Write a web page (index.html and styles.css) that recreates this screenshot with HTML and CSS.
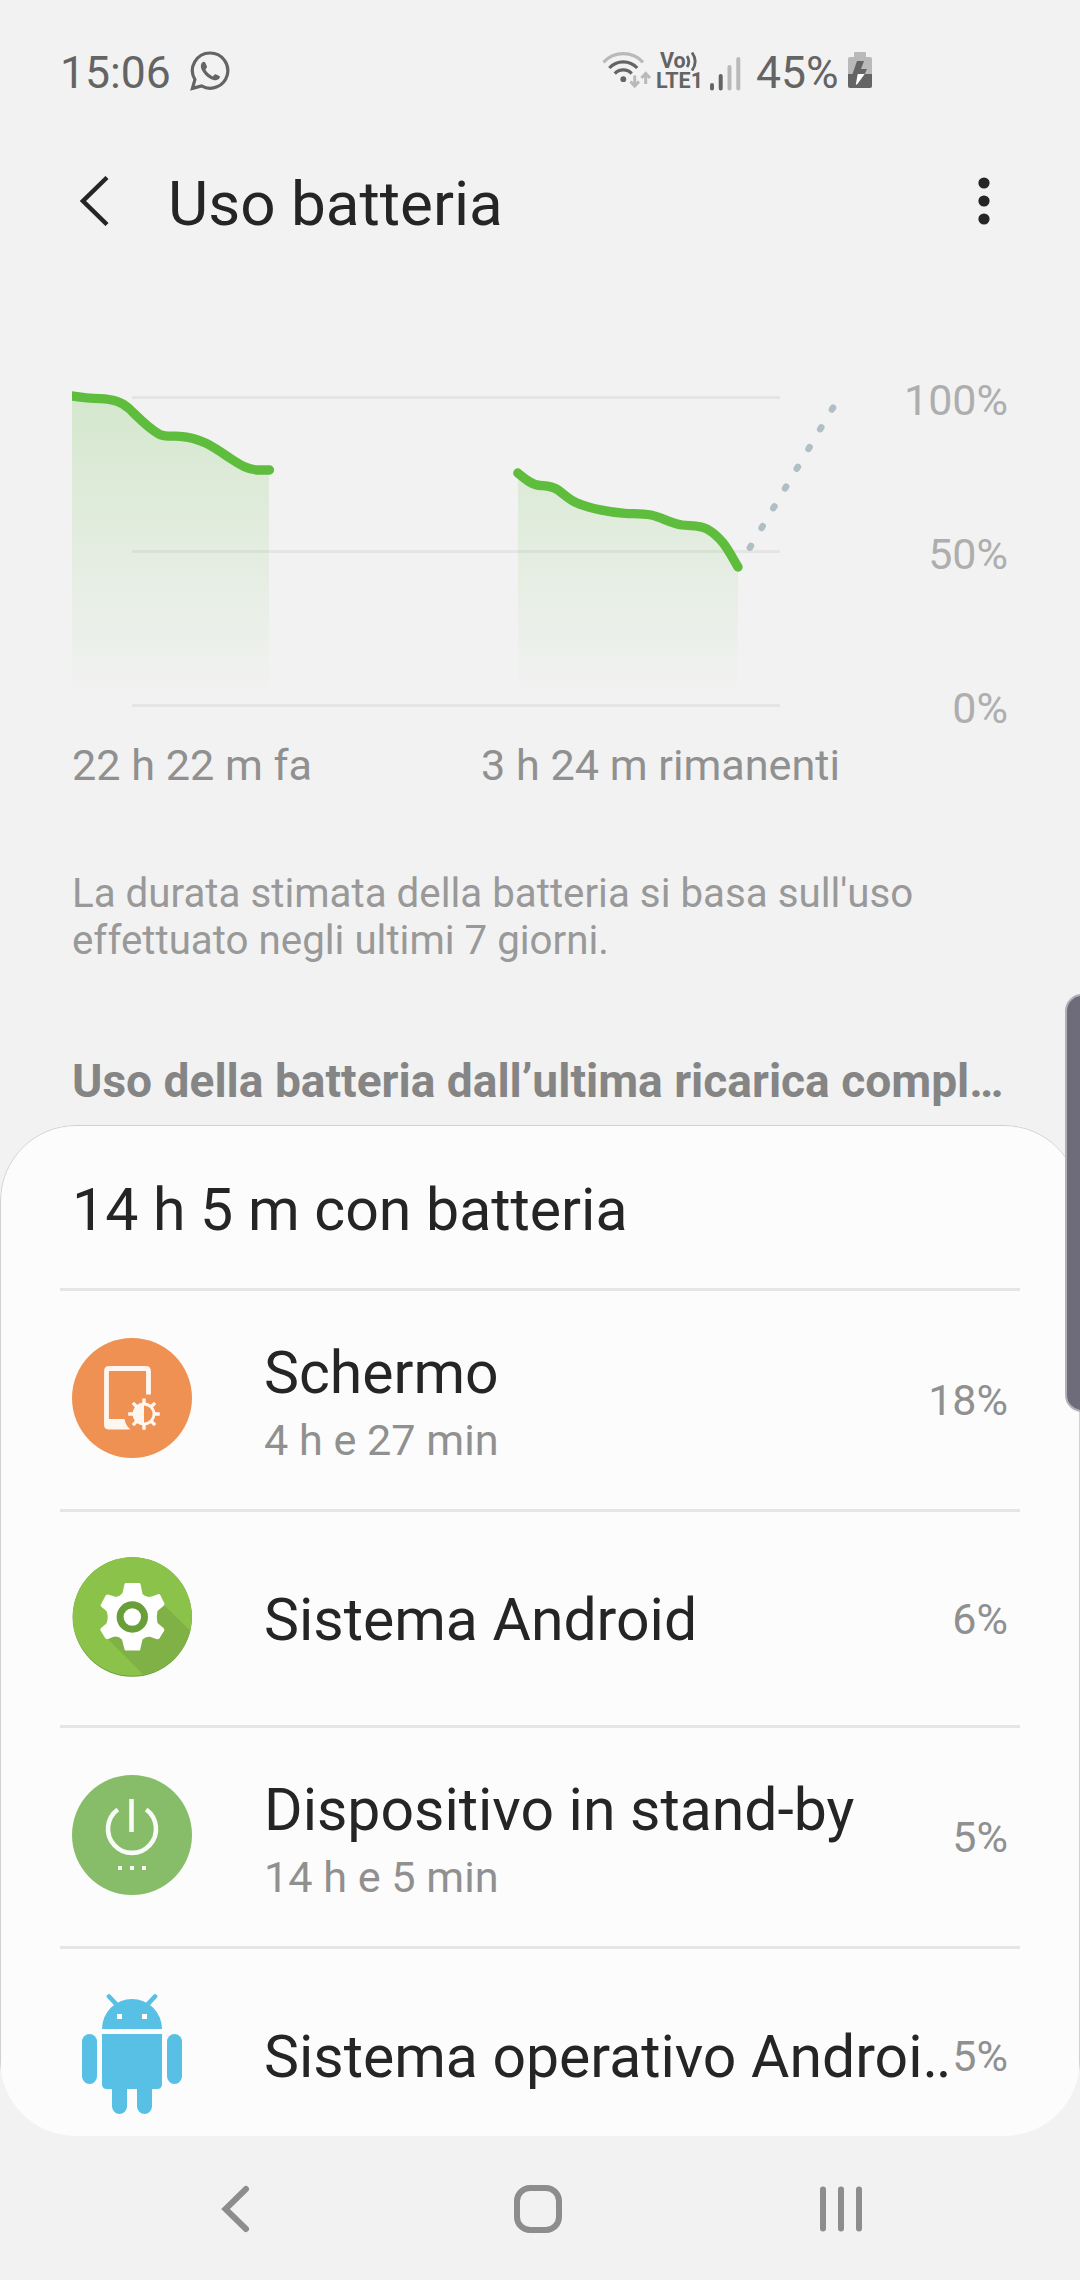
FILE: index.html
```html
<!DOCTYPE html>
<html lang="it">
<head>
<meta charset="utf-8">
<title>Uso batteria</title>
<link rel="stylesheet" href="styles.css">
</head>
<body>
<div class="screen">
  <header class="status">
    <span class="status-text">15:06</span>
    <svg class="icon-whatsapp" width="40" height="40" viewBox="0 0 40 40">
      <path d="M20.2 2A17.6 17.6 0 1 1 11.5 34.9L2.4 37.4L4.9 28.6A17.6 17.6 0 0 1 20.2 2Z" fill="none" stroke="#646464" stroke-width="3.2" stroke-linejoin="miter"/>
      <path d="M12.4 11.2C13.6 10.3 14.8 10.6 15.2 11.6L17 15.4C17.4 16.4 15.8 17.6 15.4 18.6C17 21.8 19.6 24 22.8 25.4C23.8 24.6 24.6 22.9 25.6 23.2L29.4 25C30.4 25.5 29.8 27.2 28.8 28.1C26.8 29.9 23.8 29.3 20.8 27.9C16.6 25.9 13.6 22.4 11.8 19C10.3 16 10.6 12.8 12.4 11.2Z" fill="#646464"/>
    </svg>
    <div class="status-right">
      <svg class="icon-wifi" width="50" height="40" viewBox="0 0 50 40" fill="none">
        <path d="M1.5 11.3A27 27 0 0 1 41 11.3" stroke="#b9b9b9" stroke-width="3.2"/>
        <path d="M7.3 17A19 19 0 0 1 35.2 17" stroke="#646464" stroke-width="3.2"/>
        <path d="M12.8 22.6A11.5 11.5 0 0 1 29.7 22.6" stroke="#646464" stroke-width="3.2"/>
        <circle cx="21.3" cy="28.2" r="2.9" fill="#646464"/>
        <path d="M32.7 24.5V35M28.4 30.5L32.7 35L37 30.5M43.7 33V22.5M39.4 27L43.7 22.5L48 27" stroke="#b9b9b9" stroke-width="3"/>
      </svg>
      <div class="lte">
        <div class="lte-line volte">Vo<svg width="12" height="20" viewBox="0 0 12 20" fill="none" stroke="#646464" stroke-width="2.8"><path d="M1 5Q4.600 10.500 1 16M6 1.500Q12.400 10.500 6 19.500"/></svg></div>
        <div class="lte-line">LTE1</div>
      </div>
      <svg class="icon-signal" width="31" height="36" viewBox="0 0 31 36" stroke-width="4" stroke-linecap="round">
        <path d="M2 30V33.5M10.7 21V33.5" stroke="#646464"/>
        <path d="M19.5 12V33.5M28.3 4V33.5" stroke="#b9b9b9"/>
      </svg>
      <span class="status-text">45%</span>
      <svg class="icon-battery" width="24" height="36" viewBox="0 0 24 36">
        <path d="M6 1Q6 0 7 0H17Q18 0 18 1V5H22Q24 5 24 7V22H0V7Q0 5 2 5H6Z" fill="#b9b9b9"/>
        <path d="M0 22H24V34Q24 36 22 36H2Q0 36 0 34Z" fill="#646464"/>
        <path d="M9 9H16L13 17H19L16.7 22H4.5Z" fill="#646464"/>
        <path d="M9.7 22H16.7L9 32.5H7.8Z" fill="#fff"/>
      </svg>
    </div>
  </header>

  <div class="toolbar">
    <svg class="icon-back" width="30" height="50" viewBox="0 0 30 50" fill="none"><path d="M27 1.5L3 25L27 48.5" stroke="#252525" stroke-width="4.400"/></svg>
    <h1 class="toolbar-title">Uso batteria</h1>
    <svg class="icon-more" width="12" height="48" viewBox="0 0 12 48" fill="#252525"><circle cx="6" cy="6" r="5.6"/><circle cx="6" cy="24" r="5.6"/><circle cx="6" cy="42" r="5.6"/></svg>
  </div>

  <section class="chart">
    <svg class="plot" width="780" height="358" viewBox="72 376 780 358" fill="none">
      <defs>
        <linearGradient id="fade" gradientUnits="userSpaceOnUse" x1="0" y1="396" x2="0" y2="700">
          <stop offset="0" stop-color="#5ebd3c" stop-opacity=".2"/>
          <stop offset="1" stop-color="#5ebd3c" stop-opacity="0"/>
        </linearGradient>
      </defs>
      <path d="M132 397.5H780M132 551.5H780M132 705.5H780" stroke="#e5e5e5" stroke-width="3"/>
      <path d="M72 396L100 399C143 399 135 433 166 436C213 436 225 470 257 470H269V696H72Z" fill="url(#fade)"/>
      <path d="M518 473C552 500 545 475 575 500C600 513 625 513 649 515C680 525 690 526 700 526C720 528 730 555 738 568V696H518Z" fill="url(#fade)"/>
      <path d="M66 395C80 397.500 90 398.500 100 398.700C113 399.200 121 401.500 129 408.500C139 418 148 428 159.500 434.300C165 437.200 172 435.800 180 436.300C200 437.500 213 446.500 229 457.500C241 465.500 249 470 258 470H269.500" stroke="#5ebd3c" stroke-width="9.300" stroke-linecap="round"/>
      <path d="M517.800 473C525 479 532 485 540 485.500C546 486 551 485.500 558 490C564 494 569 499.500 577 503C590 508.500 610 512.500 625 513.300C635 513.800 642 513.200 651 515C661 517 671 523.500 682 525C691 526.200 699 524.500 707 529C723 538 729 552 738 567" stroke="#5ebd3c" stroke-width="9.300" stroke-linecap="round" stroke-linejoin="round"/>
      <path d="M749.900 547.600L834 406" stroke="#b0bec5" stroke-width="6.600" stroke-linecap="round" stroke-dasharray="2 20.960"/>
    </svg>
    <div class="y-axis"><span>100%</span><span>50%</span><span>0%</span></div>
    <div class="x-axis"><span>22 h 22 m fa</span><span>3 h 24 m rimanenti</span></div>
  </section>

  <p class="note">La durata stimata della batteria si basa sull'uso effettuato negli ultimi 7 giorni.</p>
  <h2 class="section-title">Uso della batteria dall’ultima ricarica compl…</h2>

  <main class="card">
    <div class="card-body">
      <div class="card-title">14 h 5 m con batteria</div>
      <div class="row tall">
        <svg class="row-icon" width="120" height="120" viewBox="0 0 120 120">
          <circle cx="60" cy="60" r="60" fill="#ef9152"/>
          <path d="M76.500 56.500V33.500Q76.500 30.500 73.500 30.500H37.500Q34.500 30.500 34.500 33.500V84" fill="none" stroke="#fdf6f1" stroke-width="4.800"/>
          <path d="M32 81H52.500Q53.500 87.500 58.500 91.500H37Q32 91.500 32 86.500Z" fill="#fdf6f1"/>
          <circle cx="72" cy="76" r="10" fill="none" stroke="#fdf6f1" stroke-width="2.800"/>
          <path d="M72 66A10 10 0 0 0 72 86Z" fill="#fdf6f1"/>
          <path d="M72 66V60.500M72 86V91.800M62 76H56.200M82 76H87.800M65 69L60.900 64.900M79 69L83.100 64.900M65 83L60.900 87.100M79 83L83.100 87.100" stroke="#fdf6f1" stroke-width="3.400"/>
        </svg>
        <div class="row-text"><div class="row-title">Schermo</div><div class="row-sub">4 h e 27 min</div></div>
        <div class="row-value">18%</div>
      </div>
      <div class="row">
        <svg class="row-icon" width="120" height="120" viewBox="0 0 120 120">
          <defs><clipPath id="disc"><circle cx="60.300" cy="60" r="59.700"/></clipPath></defs>
          <g clip-path="url(#disc)">
            <rect width="120" height="120" fill="#689f38"/>
            <circle cx="60.300" cy="59" r="59.700" fill="#8bc34a"/>
            <path d="M35 81L71 117.500A59.700 59.700 0 0 0 118.500 74L92 48L60 60Z" fill="#7fb147"/>
          </g>
          <path d="M53.500 26H67.500L68.500 27L70.500 37Q74 41 80 39.500L86.500 37L88 37.500L92.500 46.500L92 48.500L85.500 54Q84 60 85.500 66L92 71.500L92.300 73.500L87 82L85 82.300L78 79.800Q74 79 70.500 82.500L68 93.500H53.500L52.500 92.500L50 82.500Q46 78.500 41 80L35.500 82.300L33.500 81.500L28.300 73L28.500 71.500L34.500 66.500Q37 60 34.500 54L29 49.500L28.500 48L34 38L36 37.500L42.500 39.500Q47 40.500 50.500 36L52.500 27Z" fill="#fff"/>
          <circle cx="60.300" cy="60" r="12.200" fill="#fff" stroke="#689f38" stroke-width="7"/>
        </svg>
        <div class="row-text"><div class="row-title">Sistema Android</div></div>
        <div class="row-value">6%</div>
      </div>
      <div class="row tall">
        <svg class="row-icon" width="120" height="120" viewBox="0 0 120 120">
          <circle cx="60" cy="60" r="60" fill="#87bd69"/>
          <path d="M59.500 24V57M45.800 34.500A24 24 0 1 0 74.200 34.500" fill="none" stroke="#f8fbf6" stroke-width="4.600"/>
          <path d="M46 91H50V95H46ZM58 91H62V95H58ZM70 91H74V95H70Z" fill="#f8fbf6"/>
        </svg>
        <div class="row-text"><div class="row-title">Dispositivo in stand-by</div><div class="row-sub">14 h e 5 min</div></div>
        <div class="row-value">5%</div>
      </div>
      <div class="row">
        <svg class="row-icon" width="120" height="120" viewBox="0 0 120 120" fill="#57c0e4">
          <path d="M30 35A30 30 0 0 1 90 35Z"/>
          <path d="M37 2.500L45 11M83 2.500L75 11" stroke="#57c0e4" stroke-width="4.600" stroke-linecap="round"/>
          <path d="M45 20H50V25H45ZM70 20H75V25H70Z" fill="#fff"/>
          <path d="M30 40H90V90Q90 95 85 95H80V112.500A7.500 7.500 0 0 1 65 112.500V95H55V112.500A7.500 7.500 0 0 1 40 112.500V95H35Q30 95 30 90Z"/>
          <rect x="10" y="40" width="15" height="50" rx="7.500"/>
          <rect x="95" y="40" width="15" height="50" rx="7.500"/>
        </svg>
        <div class="row-text"><div class="row-title">Sistema operativo Androi<span class="dots">..</span></div></div>
        <div class="row-value">5%</div>
      </div>
    </div>
  </main>

  <nav class="nav">
    <svg width="30" height="50" viewBox="0 0 30 50" fill="none"><path d="M26 5L5.500 25L26 45" stroke="#8d8d8d" stroke-width="6" stroke-linecap="round"/></svg>
    <svg class="icon-home" width="50" height="50" viewBox="0 0 50 50" fill="none"><rect x="4" y="4" width="42" height="42" rx="13" stroke="#8d8d8d" stroke-width="6"/></svg>
    <svg width="44" height="50" viewBox="0 0 44 50"><path d="M4 5.500V44.500M22 5.500V44.500M40 5.500V44.500" stroke="#8d8d8d" stroke-width="6" stroke-linecap="round"/></svg>
  </nav>

  <div class="edge-handle"></div>
</div>
</body>
</html>
```

FILE: styles.css
```css
* { box-sizing: border-box; }
body {
  margin: 0;
  background: #f2f2f2;
  color: #252525;
  font-family: Roboto, "Liberation Sans", sans-serif;
}
svg { display: block; flex: none; }
h1, h2, p { margin: 0; font-weight: 400; }

.screen {
  position: relative;
  display: flex;
  flex-direction: column;
  width: 1080px;
  height: 2280px;
  overflow: hidden;
}

.status {
  display: flex;
  align-items: center;
  height: 145px;
  padding-left: 60px;
}
.status-text { font-size: 44.500px; line-height: 54px; color: #646464; }
.icon-whatsapp { margin: 0 0 3px 19px; }
.status-right { display: flex; align-items: center; width: 478px; margin-left: auto; }
.icon-wifi { margin-bottom: 3px; }
.lte {
  width: 43px;
  margin: 0 0 4px 4px;
  color: #646464;
  font-size: 21.500px;
  font-weight: 700;
  line-height: 20px;
}
.lte-line { display: flex; gap: 1px; white-space: nowrap; }
.volte { margin-left: 4px; }
.volte svg { margin-left: -1px; }
.icon-signal { margin: 0 0 0 11px; }
.status-right .status-text { width: 82px; margin-left: 15px; }
.icon-battery { margin: 0 0 5px 10px; }

.toolbar {
  display: flex;
  align-items: center;
  height: 112px;
  padding: 0 90px 0 80px;
}
.toolbar-title { flex: 1; margin: 5px 0 0 58px; font-size: 62px; line-height: 76px; }

.chart {
  display: grid;
  grid-template-columns: 780px 1fr;
  grid-template-rows: 358px 50px;
  row-gap: 7px;
  margin-top: 119px;
  padding: 0 72px;
  font-size: 43.200px;
  line-height: 50px;
}
.y-axis {
  display: flex;
  flex-direction: column;
  justify-content: space-between;
  margin: -1px 0 1px 0;
  text-align: right;
  color: #aeaeae;
  font-size: 43px;
}
.x-axis { display: flex; justify-content: space-between; width: 768px; color: #909090; }

.note {
  margin-top: 79px;
  padding: 0 72px;
  color: #999;
  font-size: 40.300px;
  line-height: 47px;
}
.section-title {
  margin-top: 90px;
  padding: 0 72px;
  color: #858585;
  font-size: 46.100px;
  font-weight: 700;
  line-height: 54px;
  white-space: nowrap;
}

.card {
  height: 1011px;
  margin-top: 17px;
  border-radius: 76px;
  overflow: hidden;
}
.card-body {
  height: 1037px;
  padding: 0 59px;
  border: 1px solid #d0d0d0;
  border-radius: 76px 76px 0 0;
  background: #fcfcfc;
}
.card-title { height: 162px; padding: 6px 12px 0; font-size: 59px; line-height: 155px; }
.row {
  display: flex;
  align-items: center;
  height: 216px;
  padding: 0 12px;
  border-top: 3px solid #e5e5e5;
}
.row.tall { height: 221px; }
.row-icon { margin-bottom: 3px; }
.tall .row-icon { margin-bottom: 5px; }
.row-text { width: 688px; margin: 3px 0 0 72px; white-space: nowrap; }
.row-title { font-size: 58.900px; line-height: 78px; }
.dots { letter-spacing: -2px; }
.row-sub { color: #909090; font-size: 43.200px; line-height: 57px; }
.row-value { flex: 1; text-align: right; color: #909090; font-size: 43px; line-height: 50px; }

.nav {
  display: flex;
  align-items: center;
  justify-content: space-between;
  height: 144px;
  padding: 2px 217px 0 220px;
}
.icon-home { margin-left: 7px; }

.edge-handle {
  position: absolute;
  top: 994px;
  right: -20px;
  width: 35px;
  height: 418px;
  border: 2px solid #b1b1b4;
  border-radius: 17px;
  background: #6e6c7a;
}
```
